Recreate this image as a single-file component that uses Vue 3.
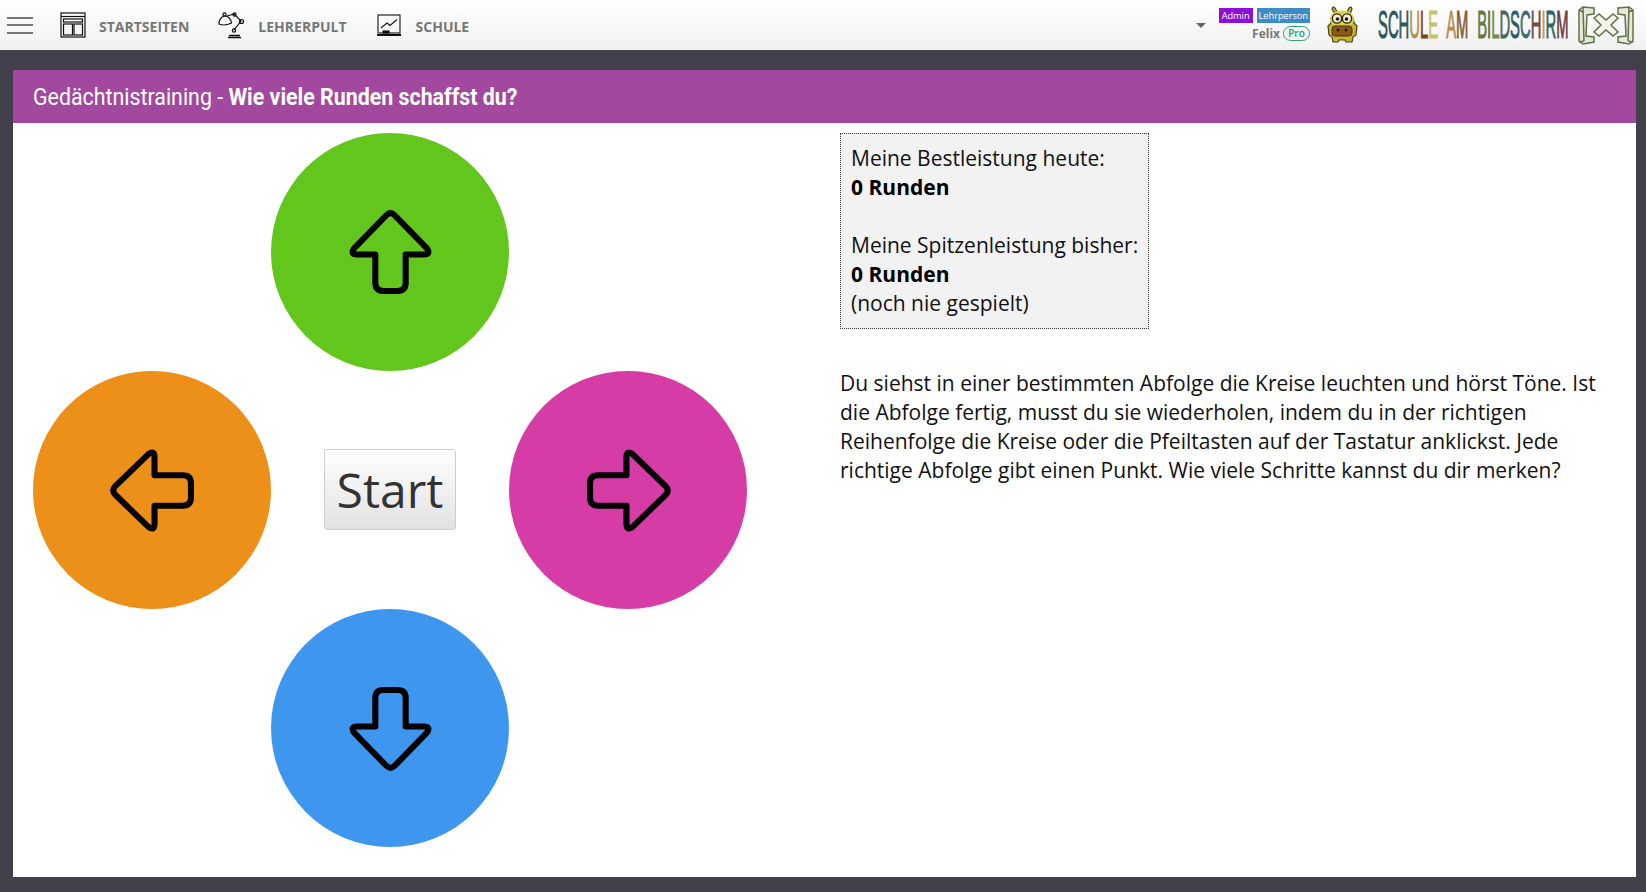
<script setup>
// Kreise des Spiels, Reihenfolge wie im Raster
const pads = [
  { name: 'up', angle: 0 },
  { name: 'left', angle: 270 },
  { name: 'right', angle: 90 },
  { name: 'down', angle: 180 }
];

const logoLetters = [
  ['S', '#2d5557'], ['C', '#2d5557'], ['H', '#2f5a5c'], ['U', '#b8924a'], ['L', '#7a3f2c'], ['E', '#c4c267'],
  [' ', '#000'],
  ['A', '#b48c4b'], ['M', '#85592f'],
  [' ', '#000'],
  ['B', '#5f7a48'], ['I', '#566b3a'], ['L', '#74894a'], ['D', '#3f6a5e'], ['S', '#2f5a60'], ['C', '#3a6a70'],
  ['H', '#6a4c3a'], ['I', '#c59a52'], ['R', '#2f6668'], ['M', '#6a3c3a']
];
</script>

<template>
  <div class="page">
    <header class="topbar">
      <button class="burger" type="button" aria-label="Menü"><i></i><i></i><i></i></button>

      <nav class="nav">
        <a class="nav-item">
          <svg width="26" height="26" viewBox="0 0 26 26" fill="none" stroke="#111" stroke-width="1.2">
            <rect x="1" y="1" width="24" height="24" />
            <path d="M1 4.500h24" />
            <rect x="3.500" y="7" width="19" height="3" />
            <rect x="3.500" y="12" width="9" height="11" />
            <rect x="14" y="12" width="8.500" height="11" />
          </svg>
          <span>STARTSEITEN</span>
        </a>
        <a class="nav-item lamp">
          <svg width="28" height="27" viewBox="0 0 28 27" fill="none" stroke="#111" stroke-width="1.2">
            <path d="M1 12c0-5 3-8 6-8s6 3 6.500 7c-4 2-9 2.500-12.500 1z" />
            <circle cx="6.500" cy="2.500" r="1.600" />
            <path d="M9 4l7-2 7 7-7 9" />
            <circle cx="16.500" cy="2.500" r="1.600" />
            <circle cx="23.500" cy="9.500" r="2" />
            <circle cx="16" cy="18.500" r="1.600" />
            <path d="M10 25.500h13M11 23.500h11" stroke-width="1.600" />
          </svg>
          <span>LEHRERPULT</span>
        </a>
        <a class="nav-item board">
          <svg width="26" height="24" viewBox="0 0 26 24" fill="none" stroke="#111" stroke-width="1.1">
            <rect x="2" y="2" width="22" height="18" />
            <path d="M5 15l6-5 3 2.500 7-6" />
            <path d="M1 22h24" stroke-width="2" />
            <rect x="7" y="18" width="6" height="2" fill="#111" />
          </svg>
          <span>SCHULE</span>
        </a>
      </nav>

      <div class="user">
        <span class="caret"></span>
        <div class="user-info">
          <div class="badges">
            <span class="badge admin">Admin</span>
            <span class="badge teacher">Lehrperson</span>
          </div>
          <div class="name-row">
            <span class="name">Felix</span>
            <span class="pro">Pro</span>
          </div>
        </div>
        <svg class="mascot" width="32" height="38" viewBox="0 0 32 38">
          <path d="M7 1l2 1 2 4h10l2-4 2-1 1 2-2 5c3 3 4 6 4 9l3 3-1 9-3 2-1 5h-6l-1-2h-6l-1 2H7l-1-5-3-2-1-9 3-3c0-3 1-6 4-9L6 3z" fill="#c4b53a" stroke="#4a4210" stroke-width="1.200" />
          <ellipse cx="16" cy="13" rx="12" ry="8.500" fill="#dccf55" />
          <circle cx="11" cy="12.500" r="4.600" fill="#f6f2dc" stroke="#2c2808" stroke-width="1.400" />
          <circle cx="21" cy="12.500" r="4.600" fill="#f6f2dc" stroke="#2c2808" stroke-width="1.400" />
          <circle cx="11.500" cy="13" r="1.800" fill="#1c1a06" />
          <circle cx="20.500" cy="13" r="1.800" fill="#1c1a06" />
          <rect x="6" y="20" width="20" height="10" rx="3" fill="#8a5a1a" stroke="#4a320c" />
          <circle cx="12" cy="24" r="1.400" fill="#21140a" />
          <circle cx="20" cy="24" r="1.400" fill="#21140a" />
        </svg>
        <div class="logo-text">
          <div class="logo-inner"><span v-for="(l, i) in logoLetters" :key="i" :style="{ color: l[1] }">{{ l[0] }}</span></div>
        </div>
        <svg class="logo-mark" width="60" height="40" viewBox="0 0 60 40" fill="none" stroke="#5f7349" stroke-width="1.500">
          <path d="M3 5l4-3 11 1v6l-7 1-1 21 8 1v5l-11 2-4-3z" fill="#e4e9da" />
          <path d="M7 2l1 34M3 5l4 2M3 37l5-1" />
          <path d="M57 5l-4-3-11 1v6l7 1 1 21-8 1v5l11 2 4-3z" fill="#e4e9da" />
          <path d="M53 2l-1 34M57 5l-4 2M57 37l-5-1" />
          <path d="M18 13l5-4 7 6 7-6 5 4-7 7 7 7-5 4-7-6-7 6-5-4 7-7z" fill="#f3f5ec" />
        </svg>
      </div>
    </header>

    <main class="panel">
      <h1 class="title"><span>Gedächtnistraining - <b>Wie viele Runden schaffst du?</b></span></h1>

      <section class="content">
        <div class="game">
          <div v-for="pad in pads" :key="pad.name" class="pad" :class="pad.name">
            <svg width="85" height="85" viewBox="0 0 84 84" :style="{ transform: `rotate(${pad.angle}deg)` }">
              <path d="M37.500 5.500Q42 1 46.500 5.500L78 38Q82 44 75 44H57V72Q57 80 49 80H35Q27 80 27 72V44H9Q2 44 6 38Z" fill="none" stroke="#000" stroke-width="6" stroke-linejoin="round" />
            </svg>
          </div>
          <button class="start" type="button">Start</button>
        </div>

        <div class="side">
          <div class="score">
            Meine Bestleistung heute:<br />
            <b>0 Runden</b><br />
            <br />
            Meine Spitzenleistung bisher:<br />
            <b>0 Runden</b><br />
            (noch nie gespielt)
          </div>
          <p class="intro">
            Du siehst in einer bestimmten Abfolge die Kreise leuchten und hörst Töne. Ist die Abfolge fertig, musst du sie wiederholen, indem du in der richtigen Reihenfolge die Kreise oder die Pfeiltasten auf der Tastatur anklickst. Jede richtige Abfolge gibt einen Punkt. Wie viele Schritte kannst du dir merken?
          </p>
        </div>
      </section>
    </main>
  </div>
</template>

<style>
html,
body {
  margin: 0;
  background: #42404b;
}
</style>

<style scoped>
.page {
  height: 892px;
  overflow: hidden;
  background: #42404b;
  font-family: "Open Sans", sans-serif;
  color: #111;
}

.topbar {
  display: flex;
  align-items: center;
  height: 50px;
  background: linear-gradient(#ffffff, #f1f1f1);
}

.burger {
  display: flex;
  flex-direction: column;
  gap: 5.500px;
  width: 26px;
  margin: 0 0 0 7px;
  padding: 0;
  border: 0;
  background: none;
}

.burger i {
  display: block;
  height: 2px;
  background: #777;
}

.nav {
  display: flex;
  align-items: center;
  margin-left: 27px;
}

.nav-item {
  display: flex;
  align-items: center;
  gap: 13px;
  margin-right: 29px;
  font-size: 14px;
  font-weight: 700;
  color: #777;
}

.nav-item span {
  padding-top: 2px;
}

.lamp {
  gap: 12px;
}

.board {
  gap: 14px;
}

.user {
  display: flex;
  align-items: center;
  margin-left: auto;
  padding-right: 10px;
}

.caret {
  width: 0;
  height: 0;
  margin-right: 13px;
  border: 5px solid transparent;
  border-top-color: #666;
  border-bottom: 0;
}

.user-info {
  display: flex;
  flex-direction: column;
  align-items: flex-end;
  gap: 3px;
  margin-top: -1px;
}

.badges {
  display: flex;
  gap: 4px;
}

.badge {
  height: 15px;
  padding: 0 2px;
  font-size: 9.200px;
  line-height: 15px;
  color: #fff;
}

.admin {
  padding: 0 3px;
  background: #8f0fd6;
}

.teacher {
  background: #3f8cc4;
}

.name-row {
  display: flex;
  align-items: center;
  gap: 3px;
}

.name {
  font-size: 12px;
  line-height: 14px;
  font-weight: 700;
  color: #777;
}

.pro {
  width: 25px;
  height: 13px;
  border: 1px solid #2fa56f;
  border-radius: 8px;
  font-size: 10px;
  line-height: 13px;
  font-weight: 600;
  text-align: center;
  color: #2a9a66;
}

.mascot {
  margin-left: 16px;
}

.logo-text {
  width: 192px;
  height: 40px;
  margin: 0 6px 0 20px;
}

.logo-inner {
  transform: scaleX(0.39);
  transform-origin: left center;
  font-family: "Liberation Sans", sans-serif;
  font-size: 38px;
  line-height: 40px;
  word-spacing: 12px;
  white-space: pre;
  -webkit-text-stroke: 1px currentColor;
}

.panel {
  display: flex;
  flex-direction: column;
  height: 807px;
  margin: 20px 10px 0 13px;
  background: #fff;
}

.title {
  height: 53px;
  margin: 0;
  padding-left: 20px;
  background: #a3489f;
  font-family: Roboto, sans-serif;
  font-size: 24px;
  font-weight: 400;
  line-height: 55px;
  color: #fff;
}

.title span {
  display: inline-block;
  transform: scaleX(0.89);
  transform-origin: left center;
  white-space: nowrap;
}

.title b {
  font-weight: 700;
}

.content {
  display: flex;
  padding: 10px 20px 0;
}

.game {
  display: grid;
  grid-template-columns: repeat(3, 238px);
  grid-template-rows: repeat(3, 238px);
  grid-template-areas:
    ". up ."
    "left start right"
    ". down .";
  flex: none;
  width: 714px;
}

.pad {
  display: flex;
  align-items: center;
  justify-content: center;
  border-radius: 50%;
}

.pad.up {
  grid-area: up;
  background: #62c61d;
}

.pad.left {
  grid-area: left;
  background: #ec9019;
}

.pad.right {
  grid-area: right;
  background: #d53ca5;
}

.pad.down {
  grid-area: down;
  background: #3f96ee;
}

.start {
  grid-area: start;
  align-self: center;
  justify-self: center;
  width: 132px;
  height: 81px;
  margin-bottom: 2px;
  padding: 0;
  border: 1px solid #ccc;
  border-radius: 3px;
  background: linear-gradient(#ffffff, #e2e2e2);
  font-family: "Open Sans", sans-serif;
  font-size: 48px;
  color: #333;
}

.side {
  width: 776px;
  margin-left: 93px;
  font-size: 21px;
  line-height: 29px;
}

.score {
  box-sizing: border-box;
  width: 309px;
  padding: 10px;
  border: 1px dotted #333;
  background: #f2f2f2;
  white-space: nowrap;
}

.score b {
  font-weight: 700;
  color: #000;
}

.intro {
  margin: 40px 0 0;
}
</style>
